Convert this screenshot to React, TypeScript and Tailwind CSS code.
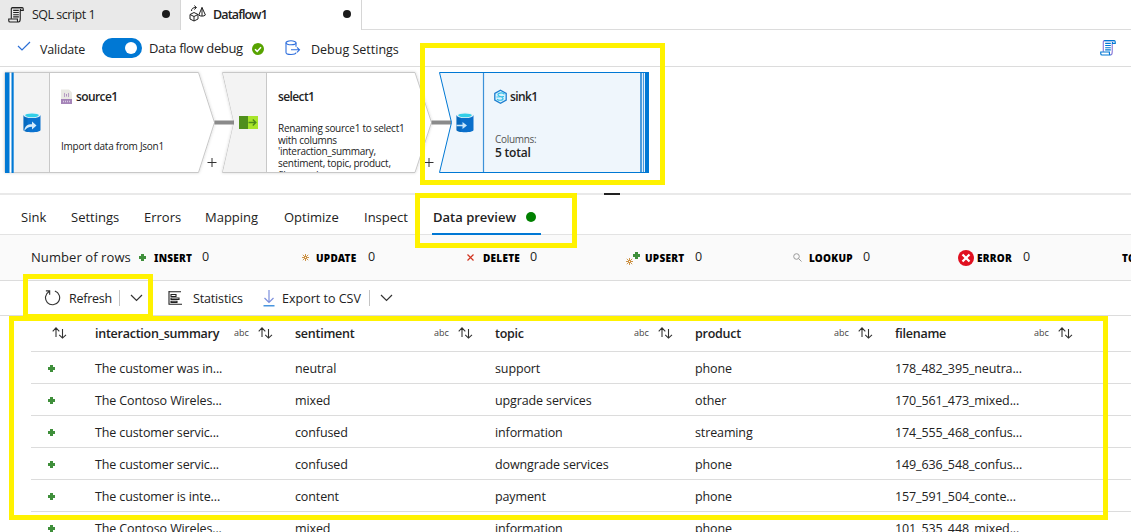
import React from "react";

const FONT = "font-['Open_Sans','Noto_Sans',sans-serif]";

function ScrollIcon({ main, side, size }: { main: string; side: string; size: number }) {
  return (
    <svg width={size} height={size} viewBox="0 0 17 17" fill="none" strokeWidth="1.2" className="shrink-0">
      <path d="M3.500 12.500V2.200C3.500 1.200 4 .7 5 .7H15M13 3.600V12.800C13 15 12.400 16 11 16" stroke={side} />
      <path d="M4.500.7H15c.9 0 1.200.5 1.200 1.400v1.500H13.200V2M.8 12.800H10v1.600c0 1 .4 1.600 1.200 1.600H2.200C1.200 16 .8 15.500.8 14.600Z" stroke={main} />
      <path d="M5.500 3.600h6M5.500 5.900h6M5.500 8.200h6M5.500 10.500h6" stroke={main} />
    </svg>
  );
}

function FlowIcon() {
  return (
    <svg width="18" height="17" viewBox="0 0 18 17" fill="none" stroke="#222" strokeWidth="1" className="mb-[3px] shrink-0">
      <path d="M1 9.500 5 7.500l4 2v4.500l-4 2-4-2ZM1 9.500l4 2 4-2M5 11.500V16" />
      <path d="M13 2.500 9.800 10c1 1.500 5.400 1.500 6.600 0ZM13 2.500V11" />
      <path d="M2.500 6C2.500 3.500 4 2.500 7 2.500M5.300.6 7.500 2.500 5.300 4.500" />
    </svg>
  );
}

function Chevron() {
  return (
    <svg width="13" height="8" viewBox="0 0 13 8" fill="none" stroke="#333" strokeWidth="1.2">
      <path d="M1 1l5.500 5.500L12 1" />
    </svg>
  );
}

function SortIcon() {
  return (
    <svg width="15" height="12" viewBox="0 0 15 12" fill="none" stroke="#333" strokeWidth="1.100">
      <path d="M4 10V1M.7 4.300 4 .9 7.300 4.300M10.500 2v9M7.200 7.800l3.300 3.300 3.500-3.300" />
    </svg>
  );
}

function Plus() {
  return (
    <svg width="7" height="7" viewBox="0 0 7 7" className="shrink-0">
      <path d="M2 0h3v2h2v3H5v2H2V5H0V2h2Z" fill="#3f8f3b" />
    </svg>
  );
}

function Star() {
  return (
    <svg width="7" height="7" viewBox="0 0 7 7" stroke="#c17a1c" strokeWidth=".8" fill="none" className="shrink-0">
      <path d="M3.500 0v7M0 3.500h7M.8.8l5.400 5.400M6.200.8.8 6.200" />
      <circle cx="3.500" cy="3.500" r="1" fill="#fff" />
    </svg>
  );
}

function Cylinder({ kind }: { kind: "source" | "sink" }) {
  return (
    <svg width="18" height="21" viewBox="0 0 18 21">
      <path d="M.5 3.200V18c0 3 17 3 17 0V3.200Z" fill={kind === "source" ? "#0a72cf" : "#0a6fcb"} />
      <path d="M.5 3.200V18c0 1 2 1.800 4 2V3Z" fill="#005ba1" opacity=".35" />
      <ellipse cx="9" cy="3.200" rx="8.500" ry="2.900" fill="#e8f2f8" />
      <ellipse cx="9" cy="3.300" rx="6.800" ry="1.900" fill="#32cfe8" />
      {kind === "source" ? (
        <path d="M1.300 19c.3-5 3-6.800 7.700-6.800V9.500l4.500 4-4.500 4v-2.700c-3.500 0-5.200 1.200-7.700 4.200Z" fill="#d4ebfb" />
      ) : (
        <path d="M.5 12.700h6V10l4.500 3.500-4.500 3.500v-2.700h-6Z" fill="#c8e6fa" />
      )}
    </svg>
  );
}

function CanvasShapes() {
  return (
    <svg width="660" height="126" viewBox="0 67 660 126" fill="none" className="block">
      <defs>
        <filter id="soft" x="-10%" y="-10%" width="120%" height="120%">
          <feDropShadow dx="0" dy="0" stdDeviation="1.500" floodOpacity=".16" />
        </filter>
      </defs>
      <g filter="url(#soft)">
        <path d="M5 72.500H198.500L214.500 122.500 198.500 172.500H5Z" fill="#fff" stroke="#c8c8c8" />
        <path d="M222.500 72.500H415L431.500 122.500 415 172.500H222.500L234 122.500Z" fill="#fff" stroke="#c8c8c8" />
      </g>
      <path d="M5 73H49.500V172H5Z" fill="#f3f3f3" />
      <path d="M49.500 73V172" stroke="#c8c8c8" />
      <path d="M9 73h5v99.500H9Z" fill="#fff" />
      <path d="M5 72.500h4.500v100.500H5ZM11.500 72.500H13.700v100.500H11.500Z" fill="#0078d4" />
      <path d="M223 73H266.500V172H223L234 122.500Z" fill="#f3f3f3" />
      <path d="M266.500 73V172" stroke="#c8c8c8" />
      <path d="M214.500 122.500h19.500M431.500 122.500h20" stroke="#8a8a8a" strokeWidth="4" />
      <path d="M439.500 72.500H648.500V172.500H439.500L451.500 122.500Z" fill="#eff6fc" stroke="#0078d4" />
      <path d="M483.500 73V172" stroke="#3b91d8" strokeWidth="1.200" />
      <path d="M640 73h2v99h-2Z" fill="#4a9bdd" />
      <path d="M642 73h1v99h-1Z" fill="#dcecf9" />
      <path d="M643 73h1v99h-1Z" fill="#4a9bdd" />
      <path d="M644 73h1v99h-1Z" fill="#e4f1fb" />
      <path d="M645 72h4v101h-4Z" fill="#0078d4" />
      <path d="M207.500 162.500h9M212 158v9M424.500 162.500h9M429 158v9" stroke="#333" />
      <rect x="239" y="116" width="9" height="13" fill="#4f8f1c" />
      <rect x="248" y="116" width="10" height="13" fill="#a8e52b" />
      <path d="M248.500 122.500h7M252.800 119.500l3 3-3 3" stroke="#4c8a1b" strokeWidth="1.400" />
      <path d="M61 89.500h8l3 3V101H61Z" fill="#e9e9e3" />
      <rect x="61" y="99" width="11" height="5" fill="#a584b8" />
      <path d="M63 101.500h7" stroke="#d9cbe2" strokeWidth="1.500" strokeDasharray="1 1" />
      <path d="M65 93c-1 0 0 2-1 2 1 0 0 2 1 2M68 93c1 0 0 2 1 2-1 0 0 2-1 2M66.500 94v2.500" stroke="#a27bb6" strokeWidth=".8" />
      <path d="M500.500 90.300l5.700 3.200v6.600l-5.700 3.200-5.700-3.200v-6.600Z" fill="#d9f2fc" stroke="#1c7ed0" strokeWidth="1.300" />
      <path d="M504.500 94.300c-2.500-2.300-7-1.300-6.500.7.300 1.500 4.700 1.500 5 3.300.3 2-3.500 2.700-6 .9M496.500 97l7.500-.5" stroke="#35bfe8" strokeWidth="1.200" />
    </svg>
  );
}

const detailTabs: [string, string][] = [
  ["Sink", "w-[50px]"],
  ["Settings", "w-[73px]"],
  ["Errors", "w-[61px]"],
  ["Mapping", "w-[79px]"],
  ["Optimize", "w-[80px]"],
  ["Inspect", "w-[68px]"],
];

const columns = ["interaction_summary", "sentiment", "topic", "product", "filename"];

const rows = [
  ["The customer was in...", "neutral", "support", "phone", "178_482_395_neutra..."],
  ["The Contoso Wireles...", "mixed", "upgrade services", "other", "170_561_473_mixed..."],
  ["The customer servic...", "confused", "information", "streaming", "174_555_468_confus..."],
  ["The customer servic...", "confused", "downgrade services", "phone", "149_636_548_confus..."],
  ["The customer is inte...", "content", "payment", "phone", "157_591_504_conte..."],
  ["The Contoso Wireles...", "mixed", "information", "phone", "101_535_448_mixed..."],
];

const LABEL = "font-['Noto_Sans',sans-serif] text-[10px] font-black text-black tracking-[0.25px]";

function Counter({ width, icon, iconWidth, label, labelWidth }: { width: string; icon: React.ReactNode; iconWidth: string; label: string; labelWidth: string }) {
  return (
    <div className={`flex shrink-0 items-center ${width}`}>
      <span className={`flex shrink-0 items-center ${iconWidth}`}>{icon}</span>
      <span className={`shrink-0 ${LABEL} ${labelWidth}`}>{label}</span>
      <span className="pb-px text-[12.5px]">0</span>
    </div>
  );
}

const NODE_TITLE = "text-[12px] font-semibold leading-4 tracking-[-0.6px]";

export default function App() {
  return (
    <div className={`relative h-[532px] w-[1131px] overflow-hidden whitespace-nowrap bg-white text-[13px] leading-[18px] text-[#222] ${FONT}`}>
      <header className="flex h-[30px]">
        <div className="flex w-[181px] items-center border-r border-[#d6d6d6] bg-[#e9e9e9] pl-2 pr-[10px]">
          <ScrollIcon main="#222" side="#222" size={16} />
          <span className="ml-2 flex-1 text-[12.5px] tracking-[-0.5px]">SQL script 1</span>
          <span className="mb-[3px] size-[8px] rounded-full bg-[#1b1b1b]" />
        </div>
        <div className="flex w-[181px] items-center border-r border-[#d6d6d6] pl-2 pr-[10px]">
          <FlowIcon />
          <span className="ml-[6px] flex-1 text-[12.5px] font-semibold tracking-[-0.85px]">Dataflow1</span>
          <span className="mb-[3px] size-[8px] rounded-full bg-[#1b1b1b]" />
        </div>
        <div className="flex-1 border-b border-[#dcdcdc]" />
      </header>

      <div className="flex h-[37px] items-center border-b border-[#dcdcdc] pl-[17px] pr-[15px]">
        <svg width="14" height="10" viewBox="0 0 14 10" fill="none" stroke="#2b6fd6" strokeWidth="1.2" className="mb-1">
          <path d="M1 5l4 4L13 1" />
        </svg>
        <span className="ml-[9px] w-[62px] pt-[3px] text-[12.5px] tracking-[-0.2px]">Validate</span>
        <span className="mb-px flex h-5 w-10 items-center justify-end rounded-full bg-[#0078d4] pr-[5px]">
          <span className="size-3 rounded-full bg-white" />
        </span>
        <span className="ml-[7px] w-[103px] tracking-[-0.35px]">Data flow debug</span>
        <svg width="12" height="12" viewBox="0 0 12 12" className="mt-px">
          <circle cx="6" cy="6" r="6" fill="#57a300" />
          <path d="M3 6.200l2.200 2.200L9 4.200" fill="none" stroke="#fff" strokeWidth="1.5" />
        </svg>
        <svg width="16" height="16" viewBox="0 0 16 16" fill="none" stroke="#2f6fdd" strokeWidth="1.100" className="ml-[21px]">
          <ellipse cx="6" cy="2.800" rx="5" ry="2" />
          <path d="M1 2.800v9.700c0 1.500 2 2 5 2s5-.5 5-2M11 2.800v4M6 9.800h8.500M12 7.300l2.500 2.500-2.500 2.500" />
        </svg>
        <span className="ml-[10px] flex-1 pt-[3px] text-[12.5px]">Debug Settings</span>
        <ScrollIcon main="#0078d4" side="#8a78d8" size={16} />
      </div>

      <section className="relative h-[126px]">
        <CanvasShapes />
        <div className={`absolute left-[76px] top-[22px] ${NODE_TITLE}`}>source1</div>
        <div className="absolute left-[61px] top-[71px] text-[10px] leading-4 tracking-[-0.25px]">Import data from Json1</div>
        <div className={`absolute left-[278px] top-[22px] ${NODE_TITLE}`}>select1</div>
        <div className="absolute left-[278px] top-[56px] h-[49px] w-[135px] overflow-hidden text-[10px] leading-[11.7px] tracking-[-0.28px]">
          Renaming source1 to select1
          <br />
          with columns
          <br />
          'interaction_summary,
          <br />
          sentiment, topic, product,
          <br />
          filename'
        </div>
        <div className={`absolute left-[510px] top-[22px] ${NODE_TITLE}`}>sink1</div>
        <div className="absolute left-[495px] top-[64px] text-[10px] leading-4 tracking-[-0.3px] text-[#555]">Columns:</div>
        <div className="absolute left-[495px] top-[78px] text-[12px] font-semibold leading-4 tracking-[-0.2px]">5 total</div>
        <div className="absolute left-[23px] top-[45px]"><Cylinder kind="source" /></div>
        <div className="absolute left-[456px] top-[45px]"><Cylinder kind="sink" /></div>
      </section>

      <div className="flex h-[2px] bg-[#e9e9e9] pl-[604px]">
        <span className="h-[2px] w-4 bg-[#222]" />
      </div>

      <nav className="flex h-[40px] border-b border-[#e3e3e3] pl-[21px] pt-[4px]">
        {detailTabs.map(([label, width]) => (
          <span key={label} className={`leading-[36px] ${width}`}>{label}</span>
        ))}
        <span className="flex h-[36px] w-[109px] items-center border-b-2 border-[#0078d4] pt-[2px] font-semibold">
          <span className="w-[94px] pl-px">Data preview</span>
          <span className="size-[10px] rounded-full bg-[#008000]" />
        </span>
      </nav>

      <div className="flex h-[46px] items-center border-b border-[#dcdcdc] bg-[#fafafa] pl-[31px]">
        <span className="w-[108px] shrink-0 pb-px tracking-[0.08px]">Number of rows</span>
        <Counter width="w-[163px]" icon={<Plus />} iconWidth="w-[15px]" label="INSERT" labelWidth="w-[48px]" />
        <Counter width="w-[165px]" icon={<Star />} iconWidth="w-[14px]" label="UPDATE" labelWidth="w-[52px]" />
        <Counter
          width="w-[159px]"
          icon={<svg width="7" height="7" viewBox="0 0 7 7" stroke="#d13420" strokeWidth="1.2"><path d="M.5.5l6 6M6.500.5l-6 6" /></svg>}
          iconWidth="w-[16px]"
          label="DELETE"
          labelWidth="w-[47px]"
        />
        <Counter width="w-[167px]" icon={<><span className="mt-[7px]"><Star /></span><span className="mb-[4px]"><Plus /></span></>} iconWidth="w-[19px]" label="UPSERT" labelWidth="w-[50px]" />
        <Counter
          width="w-[165px]"
          icon={<svg width="9" height="9" viewBox="0 0 9 9" fill="none" stroke="#999" strokeWidth="1"><circle cx="3.500" cy="3.500" r="2.800" /><path d="M5.500 5.500l3 3" /></svg>}
          iconWidth="w-[16px]"
          label="LOOKUP"
          labelWidth="w-[54px]"
        />
        <Counter
          width="w-[164px]"
          icon={<svg width="16" height="16" viewBox="0 0 16 16"><circle cx="8" cy="8" r="8" fill="#e01020" /><path d="M4.500 4.500l7 7M11.500 4.500l-7 7" stroke="#fff" strokeWidth="2.2" /></svg>}
          iconWidth="w-[19px]"
          label="ERROR"
          labelWidth="w-[46px]"
        />
        <span className={LABEL}>TOTAL</span>
      </div>

      <div className="flex h-[35px] items-center border-b border-[#dcdcdc] pl-[44px] text-[12.5px]">
        <svg width="17" height="18" viewBox="0 0 18 18" fill="none" stroke="#333" strokeWidth="1.2">
          <path d="M11.500 1.600a7.500 7.500 0 1 1-6 .5M2 1.500h4v4" />
        </svg>
        <span className="ml-[8px] w-[50px] pt-px tracking-[-0.25px]">Refresh</span>
        <span className="mr-[10px] h-4 w-px bg-[#c4c4c4]" />
        <Chevron />
        <svg width="15" height="14" viewBox="0 0 15 14" fill="none" stroke="#222" strokeWidth="1.100" className="ml-[25px]">
          <path d="M1 0v13.300h13M1 .8h12M3 3.500h5v2H3ZM3 7h8v1.500H3ZM3 10.300h6v1.200H3Z" />
        </svg>
        <span className="ml-[10px] w-[70px] pt-px tracking-[-0.15px]">Statistics</span>
        <svg width="12" height="17" viewBox="0 0 12 17" fill="none" strokeWidth="1.2">
          <path d="M6 0v12.500M1.500 8L6 12.500 10.500 8" stroke="#7c8fdc" />
          <path d="M.5 15.800h11" stroke="#1a7bd6" />
        </svg>
        <span className="ml-[7px] w-[87px] pt-px">Export to CSV</span>
        <span className="mr-[10px] h-4 w-px bg-[#c4c4c4]" />
        <Chevron />
      </div>

      <main className="pl-[31px]">
        <div className="grid h-[36px] grid-cols-[64px_200px_200px_200px_200px_236px] items-center border-b border-[#dcdcdc] pb-[2px]">
          <span className="pl-[21px]"><SortIcon /></span>
          {columns.map((name) => (
            <div key={name} className="flex items-center">
              <span className="w-[139px] pt-[2px] text-[12.5px] font-semibold tracking-[-0.25px]">{name}</span>
              <span className="w-[24px] text-[9px] text-[#444]">abc</span>
              <SortIcon />
            </div>
          ))}
        </div>
        {rows.map((row, i) => (
          <div key={i} className="grid h-[32px] grid-cols-[64px_200px_200px_200px_200px_236px] items-center border-b border-[#dcdcdc] pt-[2px] text-[12.5px] tracking-[-0.12px]">
            <span className="pl-[17px]"><Plus /></span>
            {row.map((value, j) => (
              <span key={j}>{value}</span>
            ))}
          </div>
        ))}
      </main>

      <div className="absolute left-[420px] top-[43px] h-[142px] w-[245px] border-[5px] border-[#fff200]" />
      <div className="absolute left-[415px] top-[193px] h-[55px] w-[162px] border-[5px] border-[#fff200]" />
      <div className="absolute left-[23px] top-[274px] h-[45px] w-[130px] border-[5px] border-[#fff200]" />
      <div className="absolute left-[9px] top-[316px] h-[204px] w-[1099px] border-[5px] border-[#fff200]" />
    </div>
  );
}
